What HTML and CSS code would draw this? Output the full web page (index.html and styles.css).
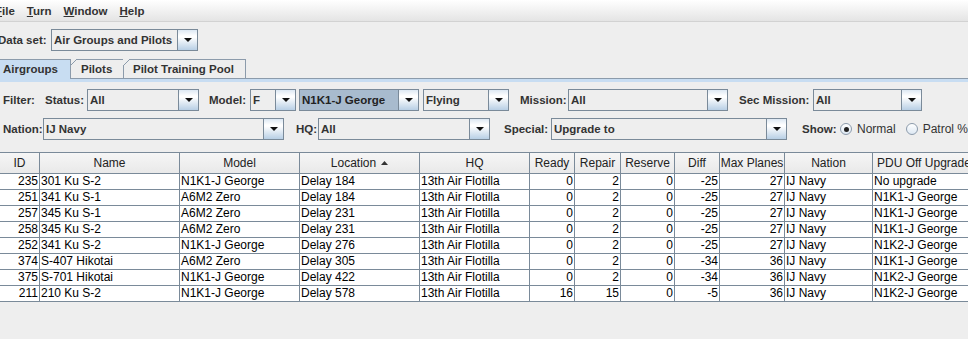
FILE: index.html
```html
<!DOCTYPE html>
<html lang="en">
<head>
  <meta charset="UTF-8">
  <title>Air Groups and Pilots</title>
  <link rel="stylesheet" href="styles.css">
</head>
<body>

<div class="menubar">
  <span class="menu first"><u>F</u>ile</span>
  <span class="menu"><u>T</u>urn</span>
  <span class="menu"><u>W</u>indow</span>
  <span class="menu"><u>H</u>elp</span>
</div>

<div class="dataset">
  <span class="lbl">Data set:</span>
  <div class="combo c-dataset"><span class="val">Air Groups and Pilots</span><span class="arrow"></span></div>
</div>

<div class="tabs">
  <div class="tab active t-air">Airgroups</div>
  <div class="tab t-pilots">Pilots</div>
  <div class="tab t-pool">Pilot Training Pool</div>
  <div class="tab-fill"></div>
</div>
<div class="tabstrip"></div>

<div class="filters">
  <div class="frow">
    <span class="lbl w-filter">Filter:</span>
    <span class="lbl w-status">Status:</span>
    <div class="combo c-status"><span class="val">All</span><span class="arrow"></span></div>
    <span class="lbl w-model">Model:</span>
    <div class="combo c-model"><span class="val">F</span><span class="arrow"></span></div>
    <div class="combo c-type selected"><span class="val">N1K1-J George</span><span class="arrow"></span></div>
    <div class="combo c-flying"><span class="val">Flying</span><span class="arrow"></span></div>
    <span class="lbl w-mission">Mission:</span>
    <div class="combo c-mission"><span class="val">All</span><span class="arrow"></span></div>
    <span class="lbl w-sec">Sec Mission:</span>
    <div class="combo c-sec"><span class="val">All</span><span class="arrow"></span></div>
  </div>
  <div class="frow">
    <span class="lbl w-nation">Nation:</span>
    <div class="combo c-nation"><span class="val">IJ Navy</span><span class="arrow"></span></div>
    <span class="lbl w-hq">HQ:</span>
    <div class="combo c-hq"><span class="val">All</span><span class="arrow"></span></div>
    <span class="lbl w-special">Special:</span>
    <div class="combo c-special"><span class="val">Upgrade to</span><span class="arrow"></span></div>
    <span class="lbl w-show">Show:</span>
    <span class="radio on"></span><span class="rtext">Normal</span>
    <span class="radio r2"></span><span class="rtext">Patrol %</span>
  </div>
</div>

<div class="table" id="table"></div>

<script>
  const headers = ["ID", "Name", "Model", "Location", "HQ", "Ready", "Repair", "Reserve", "Diff", "Max Planes", "Nation", "PDU Off Upgrade"];
  const numeric = [true, false, false, false, false, true, true, true, true, true, false, false];

  const rows = [
    [235, "301 Ku S-2", "N1K1-J George", "Delay 184", "13th Air Flotilla", 0, 2, 0, -25, 27, "IJ Navy", "No upgrade"],
    [251, "341 Ku S-1", "A6M2 Zero", "Delay 184", "13th Air Flotilla", 0, 2, 0, -25, 27, "IJ Navy", "N1K1-J George"],
    [257, "345 Ku S-1", "A6M2 Zero", "Delay 231", "13th Air Flotilla", 0, 2, 0, -25, 27, "IJ Navy", "N1K1-J George"],
    [258, "345 Ku S-2", "A6M2 Zero", "Delay 231", "13th Air Flotilla", 0, 2, 0, -25, 27, "IJ Navy", "N1K1-J George"],
    [252, "341 Ku S-2", "N1K1-J George", "Delay 276", "13th Air Flotilla", 0, 2, 0, -25, 27, "IJ Navy", "N1K2-J George"],
    [374, "S-407 Hikotai", "A6M2 Zero", "Delay 305", "13th Air Flotilla", 0, 2, 0, -34, 36, "IJ Navy", "N1K1-J George"],
    [375, "S-701 Hikotai", "N1K1-J George", "Delay 422", "13th Air Flotilla", 0, 2, 0, -34, 36, "IJ Navy", "N1K2-J George"],
    [211, "210 Ku S-2", "N1K1-J George", "Delay 578", "13th Air Flotilla", 16, 15, 0, -5, 36, "IJ Navy", "N1K2-J George"]
  ];

  function loadTable() {
    const table = document.getElementById("table");
    headers.forEach((h, i) => {
      const div = document.createElement("div");
      div.className = "th" + (i === headers.length - 1 ? " th-last" : "");
      if (h === "Location") {
        div.innerHTML = `${h}<svg class="sort" width="7" height="4" viewBox="0 0 7 4"><path d="M0 4 L3.5 0 L7 4 Z" fill="#333"/></svg>`;
      } else {
        div.textContent = h;
      }
      table.appendChild(div);
    });
    rows.forEach(r => {
      r.forEach((v, i) => {
        const div = document.createElement("div");
        div.className = numeric[i] ? "td num" : "td";
        div.textContent = v;
        table.appendChild(div);
      });
    });
  }

  loadTable();
</script>

</body>
</html>
```

FILE: styles.css
```css
body {
  margin: 0;
  width: 968px;
  height: 339px;
  overflow: hidden;
  background: #eeeeee;
  font-family: "Liberation Sans", Arial, sans-serif;
  font-size: 12px;
  color: #333333;
}

/* menu bar */
.menubar {
  height: 21px;
  display: flex;
  align-items: center;
  background: linear-gradient(#ffffff, #e4e4e4);
  border-bottom: 1px solid #d2d2d2;
  font-weight: bold;
  font-size: 11.5px;
}

.menu {
  padding: 0 6px;
  color: #333;
}

.menu.first {
  margin-left: -11px;
}

/* data set */
.dataset {
  display: flex;
  align-items: center;
  margin-top: 7px;
}

.dataset .lbl {
  margin-left: -2px;
  width: 53px;
}

.lbl {
  font-weight: bold;
  font-size: 11.5px;
  white-space: nowrap;
  flex-shrink: 0;
}

/* combo boxes */
.combo {
  box-sizing: border-box;
  height: 22px;
  display: flex;
  flex-shrink: 0;
  border: 1px solid #7a8a99;
  background: #eeeeee;
  font-weight: bold;
  font-size: 11.5px;
  color: #333;
}

.combo .val {
  flex: 1;
  padding-left: 2px;
  line-height: 20px;
  white-space: nowrap;
  overflow: hidden;
}

.combo .arrow {
  width: 19px;
  border-left: 1px solid #7a8a99;
  background: linear-gradient(#dde8f3, #ffffff 30%, #ffffff 36%, #b8cfe5);
  display: flex;
  align-items: center;
  justify-content: center;
}

.combo .arrow::after {
  content: "";
  display: block;
  border-left: 4px solid transparent;
  border-right: 4px solid transparent;
  border-top: 4px solid #111;
}

.combo.selected .val {
  background: #a8bbce;
  color: #222;
}

.c-dataset { width: 147px; }
.c-status { width: 112px; }
.c-model { width: 46px; }
.c-type { width: 120px; margin-left: 3px; }
.c-flying { width: 86px; margin-left: 4px; }
.c-mission { width: 160px; }
.c-sec { width: 109px; }
.c-nation { width: 241px; }
.c-hq { width: 172px; }
.c-special { width: 236px; }

/* tabs */
.tabs {
  display: flex;
  height: 20px;
  margin-top: 8px;
}

.tab {
  box-sizing: border-box;
  height: 20px;
  flex-shrink: 0;
  position: relative;
  font-weight: bold;
  font-size: 11.5px;
  line-height: 19px;
  color: #333;
  background: #eeeeee;
  border: 1px solid #8c9bab;
}

.tab::before {
  content: "";
  position: absolute;
  left: -1px;
  top: -1px;
  width: 7px;
  height: 7px;
  background: linear-gradient(to bottom right, #eeeeee 0, #eeeeee calc(50% - 0.7px), #8c9bab calc(50% - 0.7px), #8c9bab calc(50% + 0.7px), transparent calc(50% + 0.7px));
}

.tab.active {
  background: #c8ddf2;
  border-bottom: none;
  z-index: 1;
}

.t-air {
  width: 78px;
  margin-left: -7px;
  padding-left: 9px;
}

.t-pilots {
  width: 54px;
  margin-left: -1px;
  padding-left: 10px;
}

.t-pool {
  width: 123px;
  margin-left: -1px;
  padding-left: 9px;
}

.tab-fill {
  flex: 1;
  border-bottom: 1px solid #8c9bab;
}

.tabstrip {
  height: 3px;
  background: #c8ddf2;
}

/* filters */
.filters {
  padding-top: 7px;
}

.frow {
  display: flex;
  align-items: center;
  padding-left: 3px;
  height: 22px;
  margin-bottom: 7px;
}

.w-filter { width: 42px; }
.w-status { width: 42px; }
.w-model { width: 41px; margin-left: 10px; }
.w-mission { width: 48px; margin-left: 11px; }
.w-sec { width: 74px; margin-left: 11px; }
.w-nation { width: 40px; }
.w-hq { width: 22px; margin-left: 12px; }
.w-special { width: 47px; margin-left: 14px; }
.w-show { width: 38px; margin-left: 15px; }

.radio {
  box-sizing: border-box;
  width: 12px;
  height: 12px;
  border-radius: 50%;
  border: 1px solid #8c9bab;
  background: linear-gradient(#ffffff, #dde8f3);
  display: flex;
  align-items: center;
  justify-content: center;
  flex-shrink: 0;
}

.radio.on::after {
  content: "";
  width: 5px;
  height: 5px;
  border-radius: 50%;
  background: #222;
}

.radio.r2 {
  margin-left: 10px;
}

.rtext {
  margin-left: 5px;
  white-space: nowrap;
  color: #333;
}

/* table */
.table {
  display: grid;
  grid-template-columns: 40px 140px 120px 120px 110px 45px 46px 54px 45px 65px 88px 150px;
  width: 1023px;
  margin-top: 12px;
  color: #000;
}

.th {
  box-sizing: border-box;
  height: 22px;
  border-top: 1px solid #7a8a99;
  border-right: 1px solid #7a8a99;
  border-bottom: 1px solid #7a8a99;
  background: linear-gradient(#f6f6f6, #e9e9e9);
  text-align: center;
  line-height: 20px;
  white-space: nowrap;
  overflow: hidden;
  color: #222;
}

.th-last {
  text-align: left;
  padding-left: 4px;
}

.sort {
  margin-left: 5px;
  vertical-align: 2px;
}

.td {
  box-sizing: border-box;
  height: 16px;
  padding: 0 1px;
  border-right: 1px solid #7a8a99;
  border-bottom: 1px solid #7a8a99;
  background: #ffffff;
  line-height: 15px;
  white-space: nowrap;
  overflow: hidden;
}

.td.num {
  text-align: right;
}
```
